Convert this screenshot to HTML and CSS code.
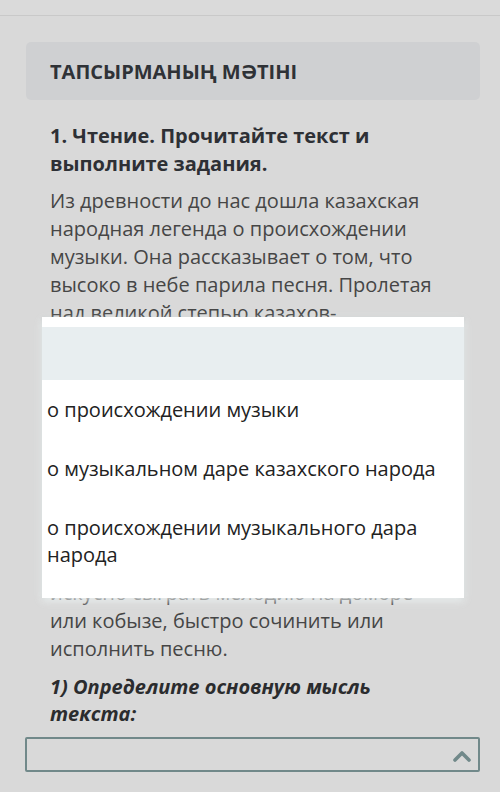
FILE: index.html
```html
<!DOCTYPE html>
<html lang="ru">
<head>
<meta charset="utf-8">
<title>Тапсырма</title>
<link rel="stylesheet" href="styles.css">
</head>
<body>
<div class="topbar"></div>
<main class="page">
  <div class="task-title">ТАПСЫРМАНЫҢ МӘТІНІ</div>
  <section class="content">
    <h2 class="heading">1. Чтение. Прочитайте текст и выполните задания.</h2>
    <p class="text">Из древности до нас дошла казахская<br>народная легенда о происхождении<br>музыки. Она рассказывает о том, что<br>высоко в небе парила песня. Пролетая<br>над великой степью казахов-<br>кочевников, она опустилась низко-<br>низко. С тех пор казахский народ<br>считается самым музыкальным<br>народом. Каждый казах с детства<br>слышит песни матери, звуки домбры<br>и кобыза. Говорят, что в степи нет<br>человека, который не умел бы петь.<br>Издавна в степи почитали тех, кто<br>умел с малых лет<br>искусно сыграть мелодию на домбре<br>или кобызе, быстро сочинить или<br>исполнить песню.</p>
    <p class="question">1) Определите основную мысль текста:</p>
  </section>
  <div class="select">
    <svg class="chevron" width="20" height="12" viewBox="0 0 20 12"><polyline points="3,10 10,3 17,10" fill="none" stroke="#71898a" stroke-width="3.6" stroke-linecap="round" stroke-linejoin="round"/></svg>
  </div>
</main>
<ul class="listbox">
  <li class="option option-empty"></li>
  <li class="option">о происхождении музыки</li>
  <li class="option">о музыкальном даре казахского народа</li>
  <li class="option">о происхождении музыкального дара народа</li>
</ul>
</body>
</html>
```
FILE: styles.css
```css
* { box-sizing: border-box; }
html, body {
  margin: 0;
  padding: 0;
}
body {
  width: 500px;
  height: 792px;
  overflow: hidden;
  background: #d9d9d9;
  font-family: "Open Sans", "Noto Sans", sans-serif;
  position: relative;
}
.topbar {
  height: 16px;
  border-bottom: 1px solid #c9c9c9;
  background: #dadada;
}
.page {
  padding: 26px 20px 0 26px;
}
.task-title {
  height: 58px;
  display: flex;
  align-items: center;
  padding-left: 24px;
  background: #cfd0d2;
  border-radius: 5px;
  font-size: 20px;
  font-weight: 700;
  color: #2f3237;
}
.content {
  padding: 0 0 0 24px;
}
.heading {
  margin: 22px 0 9px;
  font-size: 20px;
  line-height: 28px;
  font-weight: 700;
  color: #2e3035;
}
.text {
  margin: 0;
  font-size: 20px;
  line-height: 28px;
  color: #464646;
  white-space: nowrap;
}
.question {
  margin: 10px 0 0;
  font-size: 20px;
  line-height: 27px;
  font-weight: 700;
  font-style: italic;
  color: #2b2c2e;
  width: 360px;
}
.select {
  margin: 10px 0 0 -1px;
  height: 35px;
  border: 2px solid #71898a;
  border-radius: 2px;
  display: flex;
  align-items: center;
  justify-content: flex-end;
  padding: 2px 6px 0 0;
}
.listbox {
  position: absolute;
  left: 42px;
  top: 317px;
  width: 422px;
  height: 281px;
  margin: 0;
  padding: 10px 0 0;
  list-style: none;
  background: #ffffff;
  box-shadow: 0 3px 8px rgba(236, 242, 242, 0.85), 0 0 3px rgba(120, 140, 140, 0.15);
}
.option {
  padding: 16px 10px 16px 5px;
  font-size: 20px;
  line-height: 27px;
  color: #222222;
}
.option-empty {
  height: 53px;
  background: #e8eef0;
}
```
